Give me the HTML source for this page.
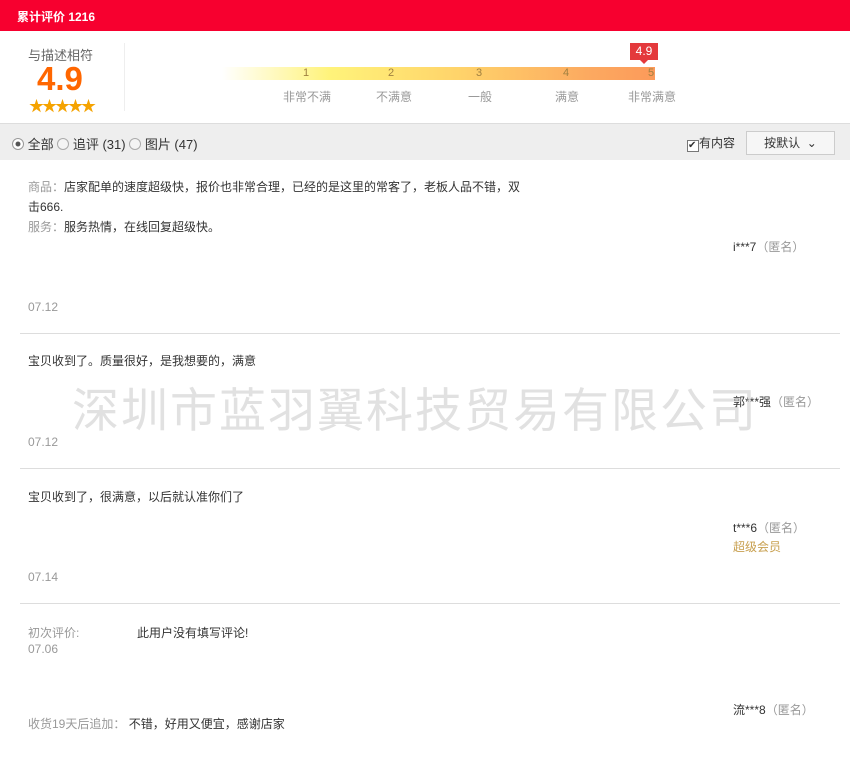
<!DOCTYPE html><html><head><meta charset="utf-8"><style>
body{margin:0;width:850px;height:776px;background:#fff;font-family:"Liberation Sans","Noto Sans CJK SC",sans-serif;font-size:12px;color:#333;position:relative;overflow:hidden}
.a{position:absolute;white-space:nowrap}
.g{color:#999}
.line{position:absolute;left:20px;width:820px;height:1px;background:#ddd}
</style></head><body>
<div class="a" style="left:0;top:0;width:850px;height:31px;background:#f7002f"></div>
<div class="a" style="left:17px;top:8px;color:#fff;font-weight:bold;font-size:12px">累计评价 1216</div>
<div class="a" style="left:28px;top:45px;color:#666;font-size:13px">与描述相符</div>
<div class="a" style="left:37px;top:61px;color:#f60;font-weight:bold;font-size:33px;line-height:36px">4.9</div>
<div class="a" style="left:29px;top:95px;color:#f5a300;font-size:15px;letter-spacing:-2px">★★★★★</div>
<div class="a" style="left:124px;top:43px;width:1px;height:68px;background:#eee"></div>
<div class="a" style="left:222px;top:67px;width:433px;height:13px;background:linear-gradient(to right,#fff,#fff37a 25%,#ffd36a 55%,#fca960 85%,#fc9a5a)"></div>
<div class="a" style="left:303px;top:67px;color:#a08040;font-size:11px">1</div>
<div class="a" style="left:388px;top:67px;color:#a08040;font-size:11px">2</div>
<div class="a" style="left:476px;top:67px;color:#a08040;font-size:11px">3</div>
<div class="a" style="left:563px;top:67px;color:#a08040;font-size:11px">4</div>
<div class="a" style="left:648px;top:67px;color:#a08040;font-size:11px">5</div>
<div class="a g" style="left:283px;top:88px">非常不满</div>
<div class="a g" style="left:376px;top:88px">不满意</div>
<div class="a g" style="left:468px;top:88px">一般</div>
<div class="a g" style="left:555px;top:88px">满意</div>
<div class="a g" style="left:628px;top:88px">非常满意</div>
<div class="a" style="left:630px;top:43px;width:28px;height:17px;background:#e4393c;color:#fff;font-size:12px;text-align:center;line-height:17px">4.9</div>
<div class="a" style="left:640px;top:60px;border:4px solid transparent;border-top-color:#e4393c;border-bottom:0"></div>
<div class="a" style="left:0;top:123px;width:850px;height:36px;background:#eee;border-top:1px solid #ddd"></div>
<div class="a" style="left:12px;top:134px;font-size:13px"><span style="display:inline-block;width:10px;height:10px;border:1px solid #999;border-radius:50%;background:radial-gradient(#555 30%,#fff 40%);vertical-align:-1px"></span> 全部 <span style="display:inline-block;width:10px;height:10px;border:1px solid #aaa;border-radius:50%;background:#f4f4f4;vertical-align:-1px"></span> 追评 (31) <span style="display:inline-block;width:10px;height:10px;border:1px solid #aaa;border-radius:50%;background:#f4f4f4;vertical-align:-1px"></span> 图片 (47)</div>
<div class="a" style="left:687px;top:134px;font-size:12px"><span style="display:inline-block;width:10px;height:10px;border:1px solid #777;background:#fff;font-size:10px;line-height:10px;vertical-align:-1px">✔</span>有内容</div>
<div class="a" style="left:746px;top:131px;width:87px;height:22px;border:1px solid #ccc;background:#f6f6f6;font-size:12px;line-height:22px;text-align:center">按默认 &nbsp;⌄</div>

<div class="a" style="left:28px;top:177px;line-height:20px;color:#333"><span class="g">商品：</span>店家配单的速度超级快，报价也非常合理，已经的是这里的常客了，老板人品不错，双<br>击666.<br><span class="g">服务：</span>服务热情，在线回复超级快。</div>
<div class="a" style="left:733px;top:238px">i***7<span class="g">（匿名）</span></div>
<div class="a g" style="left:28px;top:300px">07.12</div>
<div class="line" style="top:333px"></div>
<div class="a" style="left:28px;top:352px">宝贝收到了。质量很好，是我想要的，满意</div>
<div class="a" style="left:733px;top:393px">郭***强<span class="g">（匿名）</span></div>
<div class="a g" style="left:28px;top:435px">07.12</div>
<div class="line" style="top:468px"></div>
<div class="a" style="left:28px;top:488px">宝贝收到了，很满意，以后就认准你们了</div>
<div class="a" style="left:733px;top:519px">t***6<span class="g">（匿名）</span></div>
<div class="a" style="left:733px;top:538px;color:#c8a050">超级会员</div>
<div class="a g" style="left:28px;top:570px">07.14</div>
<div class="line" style="top:603px"></div>
<div class="a g" style="left:28px;top:624px">初次评价:</div>
<div class="a" style="left:137px;top:624px">此用户没有填写评论!</div>
<div class="a g" style="left:28px;top:642px">07.06</div>
<div class="a" style="left:733px;top:701px">流***8<span class="g">（匿名）</span></div>
<div class="a" style="left:28px;top:715px"><span class="g">收货19天后追加：</span> 不错，好用又便宜，感谢店家</div>
<div class="a" style="left:72px;top:372px;font-size:47px;color:rgba(200,200,200,0.55);letter-spacing:2px">深圳市蓝羽翼科技贸易有限公司</div>
</body></html>
